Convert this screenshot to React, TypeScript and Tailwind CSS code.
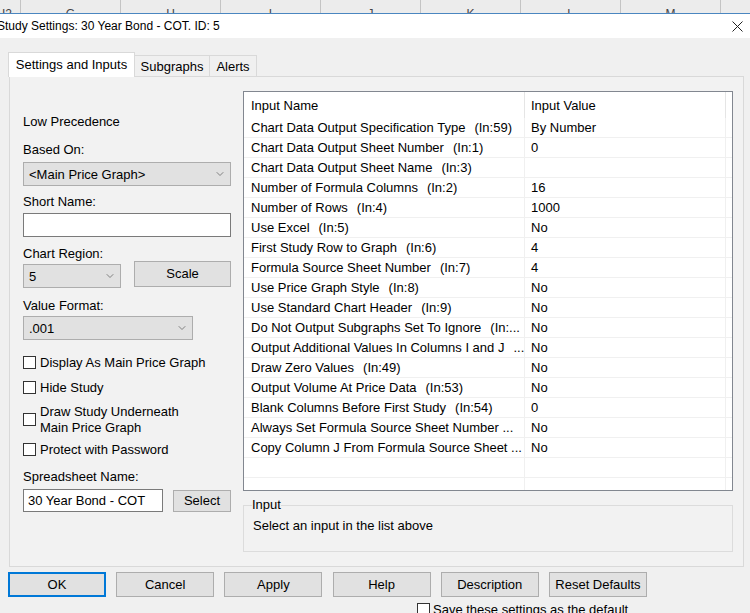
import { ChevronDown } from "lucide-react";

const F = "font-['Segoe_UI','Liberation_Sans',Arial,sans-serif]";

const rows: [string, string, string][] = [
  ["Chart Data Output Specification Type", "(In:59)", "By Number"],
  ["Chart Data Output Sheet Number", "(In:1)", "0"],
  ["Chart Data Output Sheet Name", "(In:3)", ""],
  ["Number of Formula Columns", "(In:2)", "16"],
  ["Number of Rows", "(In:4)", "1000"],
  ["Use Excel", "(In:5)", "No"],
  ["First Study Row to Graph", "(In:6)", "4"],
  ["Formula Source Sheet Number", "(In:7)", "4"],
  ["Use Price Graph Style", "(In:8)", "No"],
  ["Use Standard Chart Header", "(In:9)", "No"],
  ["Do Not Output Subgraphs Set To Ignore", "(In:...", "No"],
  ["Output Additional Values In Columns I and J", "...", "No"],
  ["Draw Zero Values", "(In:49)", "No"],
  ["Output Volume At Price Data", "(In:53)", "No"],
  ["Blank Columns Before First Study", "(In:54)", "0"],
  ["Always Set Formula Source Sheet Number ...", "", "No"],
  ["Copy Column J From Formula Source Sheet ...", "", "No"],
];

const sheetCols = ["G", "H", "I", "J", "K", "L", "M", "N"];

function Dropdown({ value, width }: { value: string; width: string }) {
  return (
    <div className={`${width} h-[24px] flex items-center justify-between bg-[#e1e1e1] border border-[#adadad] pl-[5px] pr-[4px]`}>
      <span className="pt-px">{value}</span>
      <ChevronDown className="w-[12px] h-[12px] text-[#606060]" strokeWidth={1.5} />
    </div>
  );
}

function Check({ children }: { children: React.ReactNode }) {
  return (
    <div className="flex items-center gap-[4px]">
      <div className="w-[13px] h-[13px] bg-white border border-[#333333] shrink-0" />
      <div className="leading-[16px] pt-px">{children}</div>
    </div>
  );
}

function Btn({ label, primary }: { label: string; primary?: boolean }) {
  return (
    <div
      className={`w-[98px] h-[25px] flex items-center justify-center bg-[#e1e1e1] ${
        primary ? "border-2 border-[#0078d7]" : "border border-[#adadad]"
      }`}
    >
      {label}
    </div>
  );
}

export default function App() {
  return (
    <div className={`w-[750px] h-[613px] overflow-hidden bg-[#f0f0f0] text-[13px] text-black ${F}`}>
      {/* spreadsheet column header behind the dialog, letters cut by the window */}
      <div className="h-[13px] flex bg-[#ececec] overflow-hidden text-[12px] text-[#444444]">
        <div className="w-[21px] shrink-0 h-[13px] overflow-hidden border-r border-[#c4c4c4] pl-[2px] pt-[7px] leading-[14px]">I2</div>
        {sheetCols.map((c) => (
          <div key={c} className="w-[100px] shrink-0 h-[13px] overflow-hidden border-r border-[#c4c4c4] text-center pt-[7px] leading-[14px]">
            {c}
          </div>
        ))}
      </div>

      {/* title bar */}
      <div className="h-[25px] bg-white border-t border-[#4a86c0] flex items-center justify-between">
        <span className="ml-[-3px] text-[12px]">Study Settings: 30 Year Bond - COT. ID: 5</span>
        <svg className="mr-[7px]" width="11" height="11" viewBox="0 0 11 11">
          <path d="M0.5 0.5 L10.5 10.5 M10.5 0.5 L0.5 10.5" stroke="#222" strokeWidth="1" />
        </svg>
      </div>

      {/* tabs */}
      <div className="pt-[14px]">
        <div className="flex items-end h-[24px] ml-[8px]">
          <div className="relative z-10 h-[25px] -mb-px w-[127px] bg-white border border-b-0 border-[#d9d9d9] flex items-center justify-center">
            Settings and Inputs
          </div>
          <div className="h-[21px] w-[75px] border border-l-0 border-b-0 border-[#d9d9d9] flex items-center justify-center pt-px">
            Subgraphs
          </div>
          <div className="h-[21px] w-[47px] border border-l-0 border-b-0 border-[#d9d9d9] flex items-center justify-center pt-px">
            Alerts
          </div>
        </div>

        {/* panel */}
        <div className="ml-[9px] w-[735px] h-[491px] border border-[#d9d9d9] bg-[#f2f2f2] flex">
          {/* left column */}
          <div className="ml-[13px] w-[208px] pt-[37px] flex flex-col leading-[16px]">
            <div>Low Precedence</div>
            <div className="mt-[12px]">Based On:</div>
            <div className="mt-[4px]">
              <Dropdown value="<Main Price Graph>" width="w-[208px]" />
            </div>
            <div className="mt-[8px]">Short Name:</div>
            <div className="mt-[3px] h-[24px] bg-white border border-[#7a7a7a]" />
            <div className="mt-[9px]">Chart Region:</div>
            <div className="flex items-start justify-between -mt-px">
              <div className="mt-[3px]">
                <Dropdown value="5" width="w-[98px]" />
              </div>
              <div className="w-[97px] h-[26px] flex items-center justify-center bg-[#e1e1e1] border border-[#adadad]">
                Scale
              </div>
            </div>
            <div className="mt-[10px]">Value Format:</div>
            <div className="mt-[2px]">
              <Dropdown value=".001" width="w-[170px]" />
            </div>
            <div className="mt-[14px]">
              <Check>Display As Main Price Graph</Check>
            </div>
            <div className="mt-[8px]">
              <Check>Hide Study</Check>
            </div>
            <div className="mt-[7px]">
              <Check>
                Draw Study Underneath
                <br />
                Main Price Graph
              </Check>
            </div>
            <div className="mt-[5px]">
              <Check>Protect with Password</Check>
            </div>
            <div className="mt-[11px]">Spreadsheet Name:</div>
            <div className="flex items-start justify-between">
              <div className="mt-[4px] w-[140px] h-[23px] bg-white border border-[#7a7a7a] flex items-center pl-[4px] pt-px">
                30 Year Bond - COT
              </div>
              <div className="mt-[5px] w-[58px] h-[22px] flex items-center justify-center bg-[#e1e1e1] border border-[#adadad]">
                Select
              </div>
            </div>
          </div>

          {/* right column */}
          <div className="ml-[12px] w-[490px] pt-[14px] flex flex-col">
            <div className="h-[400px] bg-white border border-[#828790] overflow-hidden">
              <div className="h-[26px] flex">
                <div className="w-[281px] h-full flex items-center pl-[7px] pt-[2px] border-r border-[#e5e5e5]">Input Name</div>
                <div className="w-[201px] h-full flex items-center pl-[6px] pt-[2px] border-r border-[#e5e5e5]">Input Value</div>
              </div>
              {rows.map(([name, inp, val]) => (
                <div key={name} className="h-[20px] flex border-b border-[#f0f0f0]">
                  <div className="w-[281px] flex items-center pl-[7px] pt-px border-r border-[#f0f0f0] whitespace-nowrap overflow-hidden">
                    {name}
                    {inp && <span className="ml-[9px]">{inp}</span>}
                  </div>
                  <div className="w-[201px] flex items-center pl-[6px] pt-px border-r border-[#f0f0f0]">{val}</div>
                </div>
              ))}
              {[0, 1].map((i) => (
                <div key={i} className="h-[20px] flex border-b border-[#f0f0f0]">
                  <div className="w-[281px] border-r border-[#f0f0f0]" />
                  <div className="w-[201px] border-r border-[#f0f0f0]" />
                </div>
              ))}
            </div>

            <div className="relative mt-[14px] h-[47px] border border-[#dcdcdc]">
              <span className="absolute left-[8px] top-[-9px] bg-[#f2f2f2] leading-[16px]">Input</span>
              <div className="pl-[9px] pt-[12px] leading-[16px]">Select an input in the list above</div>
            </div>
          </div>
        </div>

        {/* buttons */}
        <div className="mt-[5px] ml-[8px] flex gap-[10.2px]">
          <Btn label="OK" primary />
          <Btn label="Cancel" />
          <Btn label="Apply" />
          <Btn label="Help" />
          <Btn label="Description" />
          <Btn label="Reset Defaults" />
        </div>
        <div className="mt-[6px] ml-[417px] flex items-start gap-[3px] leading-[14px]">
          <div className="w-[13px] h-[13px] bg-white border border-[#333333] shrink-0" />
          <span>Save these settings as the default</span>
        </div>
      </div>
    </div>
  );
}
